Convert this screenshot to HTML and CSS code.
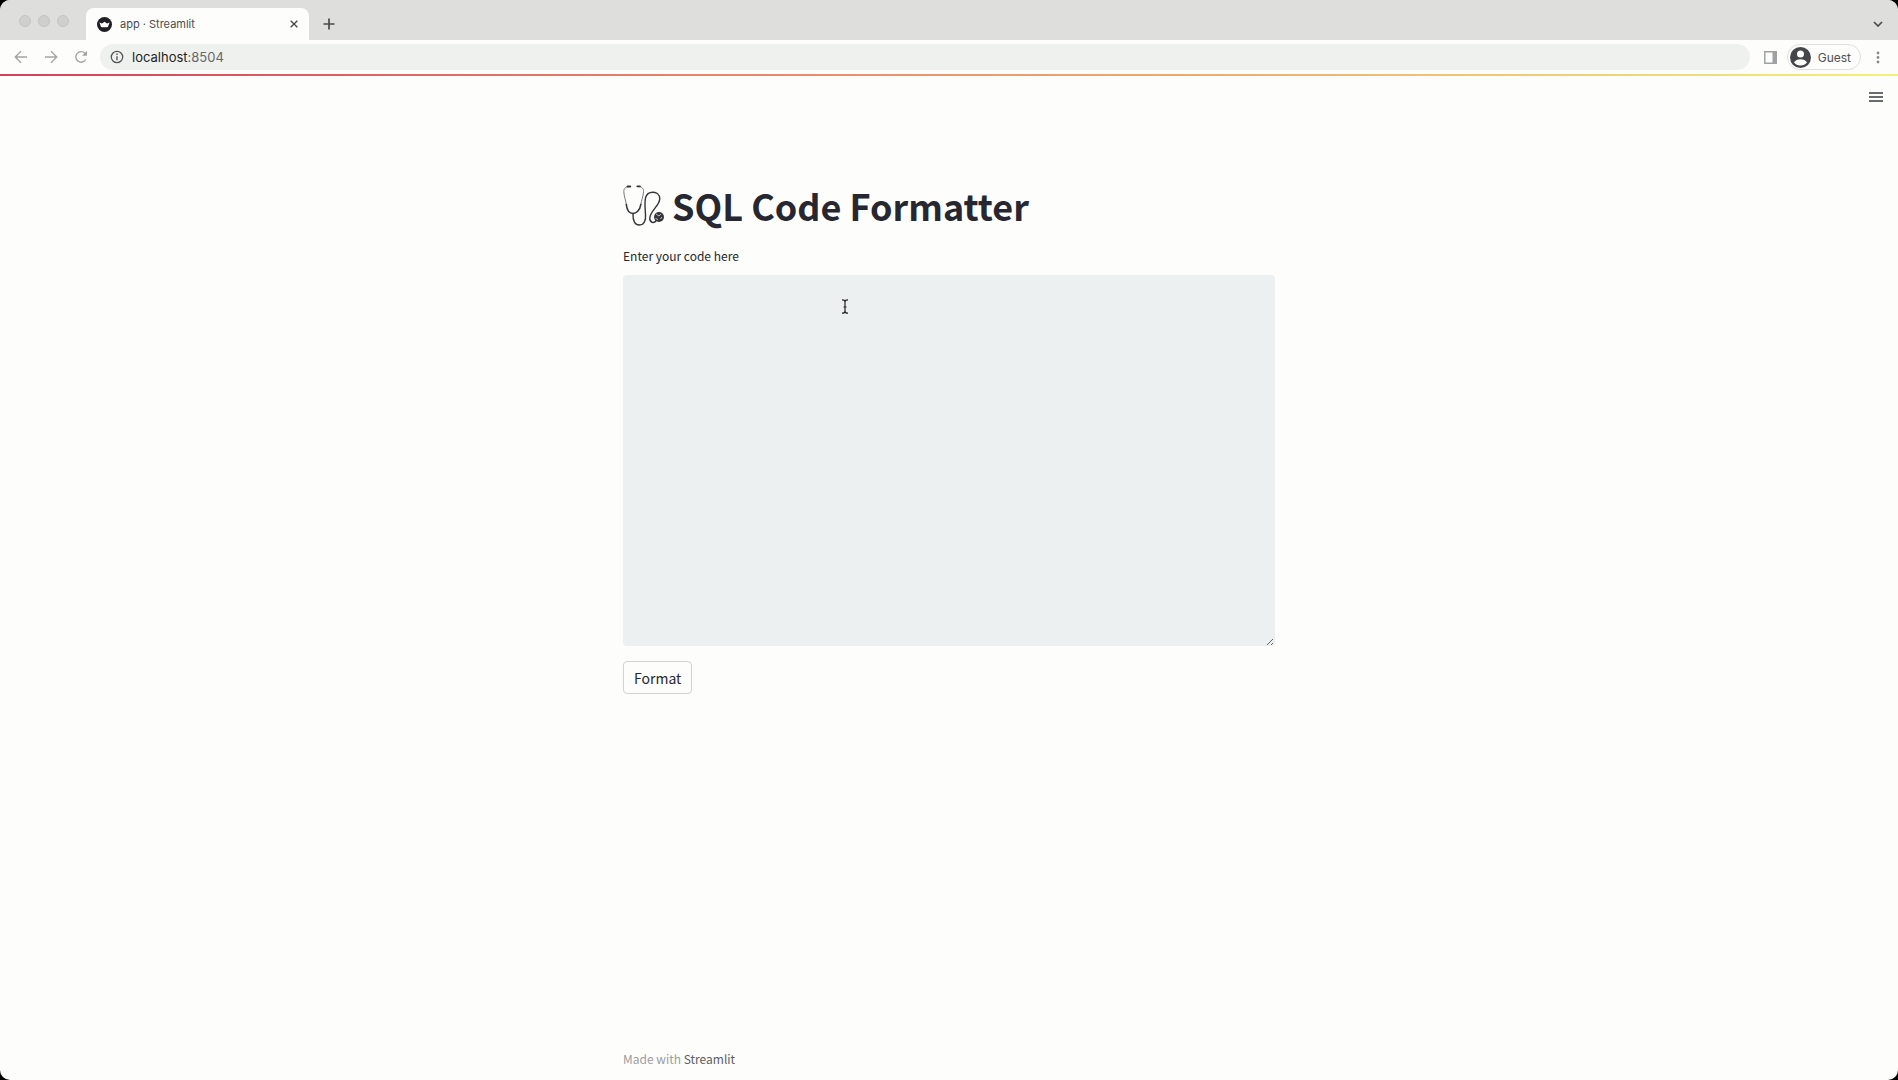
FILE: index.html
```html
<!DOCTYPE html>
<html lang="en">
<head>
<meta charset="utf-8">
<title>app · Streamlit</title>
<link rel="stylesheet" href="styles.css">
</head>
<body>
<div class="window">
  <header class="browser">
    <div class="tabstrip">
      <div class="lights"><span class="light"></span><span class="light"></span><span class="light"></span></div>
      <div class="tab">
        <svg class="favicon" viewBox="0 0 16 16" aria-hidden="true"><circle cx="8" cy="8" r="8" fill="#1f1f24"/><path d="M2.600 5.800l2.700 1.100L8 5l2.700 1.900 2.700-1.100-1.500 4.200q-.3.800-1 .8H5.100q-.7 0-1-.8z" fill="#fdfdfc"/></svg>
        <span class="tab-title">app · Streamlit</span>
        <button class="icon-btn" aria-label="Close tab"><svg width="8" height="8" viewBox="0 0 8 8"><path d="M.7.7l6.600 6.600M7.300.7L.7 7.300" stroke="#4a4b4e" stroke-width="1.400"/></svg></button>
      </div>
      <button class="icon-btn new-tab" aria-label="New tab"><svg width="12" height="12" viewBox="0 0 12 12"><path d="M6 .5v11M.5 6h11" stroke="#4a4b4e" stroke-width="1.700"/></svg></button>
      <button class="icon-btn tab-search" aria-label="Search tabs"><svg width="10" height="6" viewBox="0 0 10 6"><path d="M1 1l4 4 4-4" fill="none" stroke="#4a4b4e" stroke-width="1.700"/></svg></button>
    </div>
    <div class="toolbar">
      <nav class="nav">
        <button class="icon-btn" aria-label="Back"><svg width="14" height="14" viewBox="0 0 14 14"><path d="M13 7H1.500M7 1.200L1.200 7 7 12.800" fill="none" stroke="#a3a4a5" stroke-width="1.300"/></svg></button>
        <button class="icon-btn" aria-label="Forward"><svg width="14" height="14" viewBox="0 0 14 14"><path d="M1 7h11.500M7 1.200L12.800 7 7 12.800" fill="none" stroke="#a3a4a5" stroke-width="1.300"/></svg></button>
        <button class="icon-btn" aria-label="Reload"><svg width="14" height="14" viewBox="0 0 14 14"><path d="M11.700 9.500A5.300 5.300 0 1 1 11 3.300L12.300 4.700" fill="none" stroke="#a3a4a5" stroke-width="1.400"/><path d="M13 .8v5H8z" fill="#a3a4a5"/></svg></button>
      </nav>
      <div class="omnibox">
        <svg width="14" height="14" viewBox="0 0 14 14" aria-hidden="true"><circle cx="7" cy="7" r="5.700" fill="none" stroke="#55565a" stroke-width="1.300"/><path d="M7 6.200v4M7 3.600v1.400" stroke="#55565a" stroke-width="1.400"/></svg>
        <span class="url"><span class="host">localhost</span>:8504</span>
      </div>
      <button class="icon-btn" aria-label="Side panel"><svg width="13" height="13" viewBox="0 0 13 13"><path d="M.8.8h11.400v11.400H.8z" fill="none" stroke="#a0a1a3" stroke-width="1.500"/><path d="M8.500 0H13v13H8.500z" fill="#a0a1a3"/></svg></button>
      <button class="profile"><svg width="21" height="21" viewBox="0 0 21 21" aria-hidden="true"><circle cx="10.500" cy="10.500" r="10.500" fill="#454649"/><circle cx="10.500" cy="7" r="3.500" fill="#fdfdfc"/><path d="M4 15.200q2.200-3 6.500-3t6.500 3q-2.400 3.300-6.500 3.300T4 15.200z" fill="#fdfdfc"/></svg>Guest</button>
      <button class="icon-btn" aria-label="Menu"><svg width="4" height="13" viewBox="0 0 4 13"><g fill="#88898c"><circle cx="2" cy="2" r="1.400"/><circle cx="2" cy="6.500" r="1.400"/><circle cx="2" cy="11" r="1.400"/></g></svg></button>
    </div>
  </header>
  <div class="decoration"></div>
  <div class="app-header">
    <button class="icon-btn" aria-label="Main menu"><svg width="14" height="10" viewBox="0 0 14 10"><path d="M0 1h14M0 5h14M0 9h14" stroke="#3a3b41" stroke-width="1.700"/></svg></button>
  </div>
  <main class="content">
    <h1 class="title">
      <svg class="stethoscope" viewBox="0 0 41 41" aria-hidden="true"><g fill="none" stroke="#34353a" stroke-linecap="round"><path d="M7 1.500C2.500 1.200.8 3.500.8 6.500c.2 5.500 2 8 2.500 13" stroke="#77787c" stroke-width="1"/><path d="M14.500 1.500c4.500-.3 6 2 6 5-.2 5.500-2 8-2.700 13" stroke="#77787c" stroke-width="1"/><path d="M4.500 1.500H7.300M14.300 1.300h2.600" stroke-width="1.800"/><path d="M3.300 19.500C4 25.500 7 28.500 10 28.500s7-3 7.800-9" stroke-width="1.600"/><path d="M10 28.500C9.700 36 12 40 16.500 40c5 0 6.500-5 6-10.500C22 23 21.500 17.500 22.500 13c2-8 14-7.500 14.300.5.100 7-9.800 12.500-10 19.500-.2 4.500 4 6 6.500 2.500" stroke-width="1.400"/></g><circle cx="36" cy="32" r="5" fill="#36373b"/><path d="M33 29l3 2 2-2M32.500 33.500l2.500 1M37.500 34l1.500-2" stroke="#bbb" fill="none"/></svg>
      <span>SQL Code Formatter</span>
    </h1>
    <label class="label" for="code">Enter your code here</label>
    <div class="field">
      <textarea id="code" class="code"></textarea>
      <svg class="cursor" width="8" height="15" viewBox="0 0 8 15" aria-hidden="true"><path d="M1 .8q3 0 3 2v9.400q0 2-3 2M7 .8q-3 0-3 2v9.400q0 2 3 2M2.500 8h3" fill="none" stroke="#222" stroke-width="1.200"/></svg>
      <svg class="grip" width="8" height="8" viewBox="0 0 8 8" aria-hidden="true"><path d="M1 7l6-6M5 7l2-2" stroke="#66676a"/></svg>
    </div>
    <button class="format">Format</button>
  </main>
  <footer class="footer">Made with <a href="#">Streamlit</a></footer>
</div>
</body>
</html>
```
FILE: styles.css
```css
* { box-sizing: border-box; }

body {
  margin: 0;
  background: #000;
  color: #262730;
  font-family: "Noto Sans CJK SC", "Noto Sans", sans-serif;
}

button { font: inherit; color: inherit; cursor: pointer; }
svg { display: block; flex: none; }

.window {
  display: flex;
  flex-direction: column;
  min-height: 100vh;
  overflow: hidden;
  border-radius: 10px;
  background: #fdfdfb;
}

.icon-btn {
  display: flex;
  align-items: center;
  justify-content: center;
  padding: 0;
  border: 0;
  background: none;
}

/* Browser chrome */
.browser { font-family: Inter, "Liberation Sans", sans-serif; }

.tabstrip {
  display: flex;
  height: 40px;
  padding: 8px 15px 0 19px;
  background: #dededc;
}

.lights { display: flex; gap: 7px; width: 67px; padding-top: 7px; }
.light {
  width: 12px;
  height: 12px;
  border: 1px solid #c4c4c3;
  border-radius: 50%;
  background: #cfcfce;
}

.tab {
  display: flex;
  align-items: center;
  gap: 8px;
  width: 223px;
  padding: 0 11px;
  border-radius: 8px 8px 0 0;
  background: #fdfdfb;
}
.favicon { width: 15px; height: 15px; }
.tab-title { flex: 1; font-size: 11px; color: #4a4b4e; }
.new-tab { margin-left: 14px; }
.tab-search { margin-left: auto; }

.toolbar {
  display: flex;
  align-items: center;
  height: 34px;
  padding: 0 18px 0 14px;
}
.nav { display: flex; gap: 16px; width: 86px; }
.omnibox {
  display: flex;
  flex: 1;
  align-items: center;
  gap: 8px;
  height: 26px;
  margin-right: 14px;
  padding: 0 10px;
  border-radius: 13px;
  background: #eff1ee;
  color: #66676a;
  font-size: 13px;
}
.host { color: #222326; }
.profile {
  display: flex;
  align-items: center;
  gap: 7px;
  height: 26px;
  margin: 0 15px 0 10px;
  padding: 0 9px 0 2px;
  border: 1px solid #dedfe0;
  border-radius: 13px;
  background: none;
  color: #4f5053;
  font-size: 12px;
}

/* Streamlit page */
.decoration {
  height: 2px;
  background: linear-gradient(90deg, #d3405a, #e8806a 35%, #ecae72 65%, #f5f07a);
}
.app-header {
  display: flex;
  justify-content: flex-end;
  align-items: center;
  height: 42px;
  padding-right: 15px;
}

.content,
.footer { width: 100%; max-width: 652px; margin: 0 auto; }
.content { flex: 1; padding-top: 59px; }

.title {
  display: flex;
  align-items: center;
  gap: 8px;
  margin: 0 0 13px;
  font-size: 36px;
  font-weight: 700;
  line-height: 56px;
}
.stethoscope { width: 41px; height: 41px; }

.label {
  display: block;
  margin-bottom: 9px;
  font-size: 12px;
  line-height: 20px;
}

.field { position: relative; }
.code {
  display: block;
  width: 100%;
  height: 371px;
  padding: 12px;
  border: 0;
  border-radius: 4px;
  outline: 0;
  background: #ecf0f1;
  resize: none;
}
.cursor { position: absolute; top: 24px; left: 218px; }
.grip { position: absolute; right: 1px; bottom: 0; }

.format {
  display: block;
  height: 33px;
  margin-top: 15px;
  padding: 0 10px;
  border: 1px solid #d2d2d4;
  border-radius: 4px;
  background: none;
  font-size: 14px;
  line-height: 20px;
}

.footer {
  padding-bottom: 11px;
  color: #9c9da0;
  font-size: 12px;
  line-height: 20px;
}
.footer a { color: #5b5c60; text-decoration: none; }
```
